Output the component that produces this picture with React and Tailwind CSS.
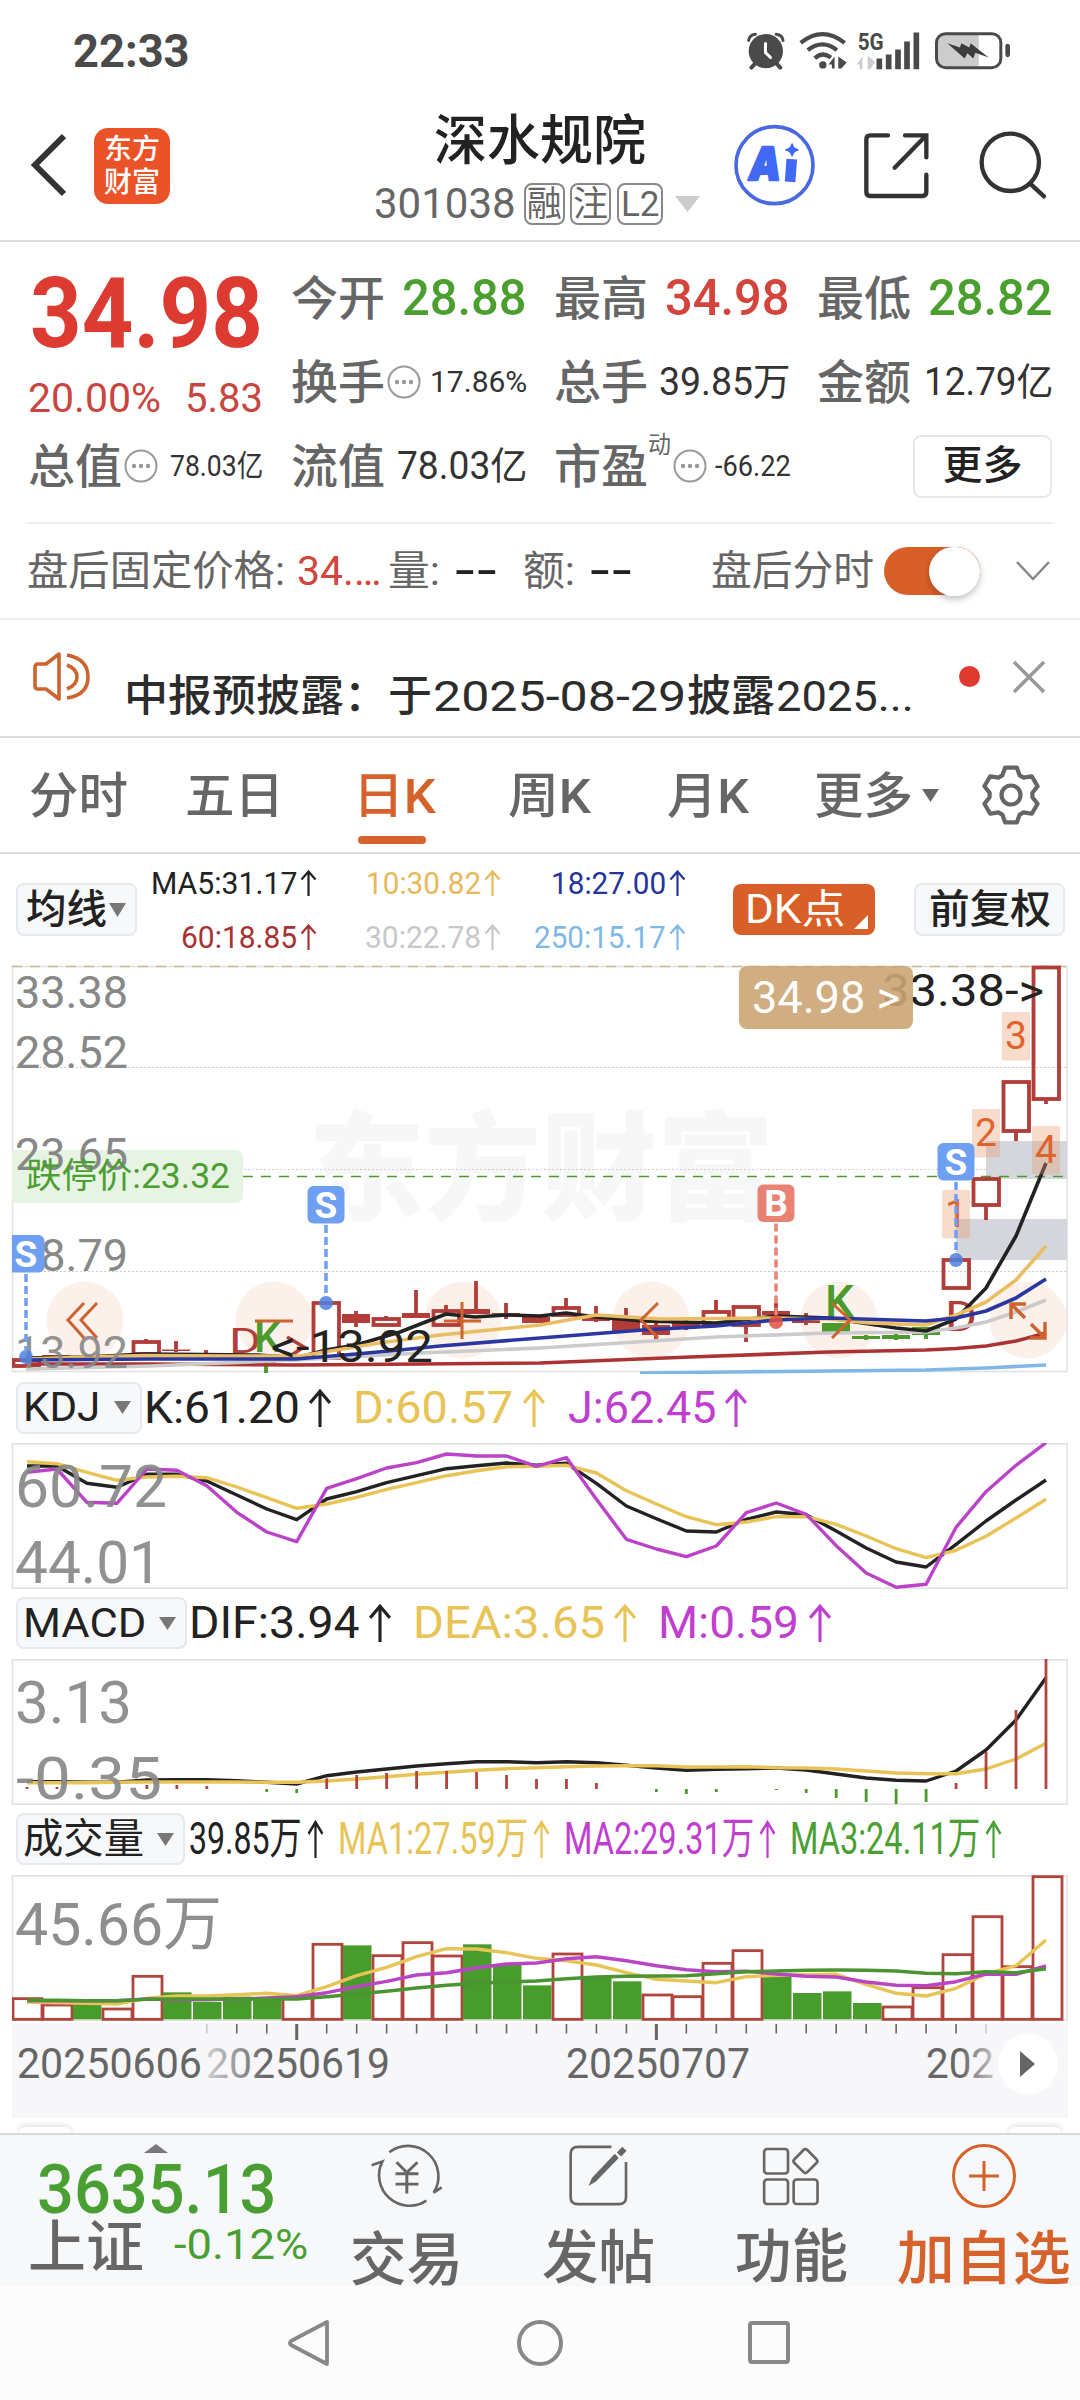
import React, { useLayoutEffect, useRef } from "react";

const FONT = "font-[Roboto,'Noto_Sans_CJK_SC',sans-serif]";

/* Text condensed or widened to fill the width of its box. */
function Fit({ className = "", children }) {
  const box = useRef(null);
  const inner = useRef(null);
  useLayoutEffect(() => {
    const natural = inner.current.offsetWidth;
    if (natural) inner.current.style.transform = `scaleX(${box.current.clientWidth / natural})`;
  }, [children]);
  return (
    <span ref={box} className={`flex shrink-0 whitespace-nowrap leading-none ${className}`}>
      <span ref={inner} className="block shrink-0 origin-left">{children}</span>
    </span>
  );
}

function Up({ className = "" }) {
  return (
    <svg viewBox="0 0 17 26" preserveAspectRatio="none" className={`shrink-0 ${className}`} fill="none" stroke="currentColor" strokeWidth="2.200">
      <path d="M8.5 1.5V26M1.5 9.500L8.500 1.500L15.500 9.500" />
    </svg>
  );
}

function Down({ className = "" }) {
  return (
    <svg viewBox="0 0 18 14" preserveAspectRatio="none" className={`shrink-0 ${className}`}>
      <path d="M0 0H18L9 14Z" fill="currentColor" />
    </svg>
  );
}

function StatusBar() {
  return (
    <div className="flex h-[102px] items-center text-[#4a4a4a]">
      <Fit className="ml-[73px] w-[117px] text-[46px] font-bold">22:33</Fit>
      <svg viewBox="165 45 125 125" className="ml-[555px] h-[42px] w-[42px] shrink-0">
        <circle cx="227" cy="108" r="51" fill="currentColor" />
        <g fill="none" stroke="currentColor" strokeLinecap="round">
          <path d="M176 76Q178 60 196 58M278 76Q276 60 258 58" strokeWidth="9" />
          <path d="M195 145L184 157M259 145L270 157" strokeWidth="12" />
        </g>
        <path d="M226 85V112L241 127" fill="none" stroke="#fff" strokeWidth="9" strokeLinecap="round" />
      </svg>
      <svg viewBox="320 45 152 125" className="ml-[9.5px] h-[42px] w-[51px] shrink-0">
        <g fill="none" stroke="currentColor" strokeWidth="12.500">
          <path d="M331 83Q396 31 462 83" />
          <path d="M352 105Q396 71 439 105" />
          <path d="M373 129Q397 108 421 127" />
        </g>
        <circle cx="397" cy="149" r="11" fill="currentColor" />
        <path d="M414 148L432 124V160H424V148ZM443 124L468 142L452 160H443Z" fill="currentColor" />
      </svg>
      <svg viewBox="495 45 195 125" className="ml-[8px] h-[42px] w-[65px] shrink-0 overflow-visible">
        <text x="500" y="105" fontSize="74" fontWeight="700" textLength="78" lengthAdjust="spacingAndGlyphs" fill="currentColor">5G</text>
        <path d="M497 148L514 124V162H506V148ZM530 122L552 140L538 162H530Z" fill="#ccc" />
        <g stroke="currentColor" strokeWidth="17" strokeLinecap="butt">
          <path d="M565 130V162M593 118V162M621 103V162M648 79V162M676 52V162" />
        </g>
      </svg>
      <svg viewBox="725 45 237 125" className="ml-[12px] h-[42px] w-[79px] shrink-0">
        <rect x="736" y="56" width="126" height="101" rx="24" fill="#ccc" />
        <rect x="820" y="56" width="42" height="101" fill="#ccc" />
        <rect x="735.500" y="55.500" width="193" height="102" rx="27" fill="none" stroke="currentColor" strokeWidth="9" />
        <rect x="942" y="86" width="14" height="40" rx="7" fill="currentColor" />
        <path d="M768 84L806 97L810 84L834 97L838 84L862 104L892 127L852 113L846 130L828 114L820 130Z" fill="#3c3c3c" />
      </svg>
    </div>
  );
}

function Header() {
  return (
    <div className="flex h-[140px] items-start border-b-2 border-[#dcdcdc]">
      <svg viewBox="0 0 36 64" className="ml-[30px] mt-[31px] h-[64px] w-[36px] shrink-0" fill="none" stroke="#333" strokeWidth="6">
        <path d="M34 3L5 32L34 61" />
      </svg>
      <div className="ml-[28px] mt-[26px] flex h-[76px] w-[76px] shrink-0 flex-col items-center justify-center rounded-[14px] bg-[#ea5328] text-[28px] font-medium leading-[33px] text-white">
        <span>东方</span>
        <span>财富</span>
      </div>
      <div className="ml-[204px] w-[326px] shrink-0">
        <Fit className="ml-[60px] mt-[13px] w-[212px] text-[54px] font-medium text-[#222]">深水规院</Fit>
        <div className="mt-[10px] flex h-[50px] items-center text-[#666]">
          <Fit className="w-[142px] text-[42px]">301038</Fit>
          <span className="ml-[8px] flex h-[42px] w-[41px] items-center justify-center rounded-[8px] border-2 border-[#888] text-[35px] leading-none">融</span>
          <span className="ml-[5px] flex h-[42px] w-[42px] items-center justify-center rounded-[8px] border-2 border-[#888] text-[35px] leading-none">注</span>
          <span className="ml-[6px] flex h-[42px] w-[46px] items-center justify-center rounded-[8px] border-2 border-[#888] text-[35px] leading-none">L2</span>
          <Down className="ml-[12px] h-[16px] w-[25px] text-[#ccc]" />
        </div>
      </div>
      <svg viewBox="130 328 250 250" className="ml-[33px] mt-[22px] h-[83px] w-[83px] shrink-0">
        <circle cx="255" cy="452" r="116" fill="none" stroke="#4a68e2" strokeWidth="11" />
        <text x="178" y="496" fontFamily="Inter" fontSize="138" fontWeight="900" fontStyle="italic" textLength="96" lengthAdjust="spacingAndGlyphs" fill="#4169f5" stroke="#4169f5" strokeWidth="7" strokeLinejoin="round">A</text>
        <path d="M307 434L302 502" stroke="#4169f5" strokeWidth="32" />
        <path d="M308 387Q311 403 327 406Q311 409 308 425Q305 409 288 406Q305 403 308 387Z" fill="#4169f5" stroke="#4169f5" strokeWidth="4" />
      </svg>
      <svg viewBox="515 345 207 210" className="ml-[46px] mt-[28px] h-[70px] w-[69px] shrink-0" fill="none" stroke="#333" strokeWidth="13" strokeLinecap="round">
        <path d="M593 361H540Q528 361 528 373V531Q528 543 540 543H696Q708 543 708 531V479" />
        <path d="M644 361H708V427M706 363L613 458" />
      </svg>
      <svg viewBox="865 345 210 210" className="ml-[47px] mt-[28px] h-[70px] w-[70px] shrink-0" fill="none" stroke="#333" strokeWidth="13" strokeLinecap="round">
        <circle cx="962" cy="442" r="86" />
        <path d="M1024 508L1063 544" />
      </svg>
    </div>
  );
}

function Dots() {
  return (
    <svg viewBox="0 0 34 34" className="ml-[2px] h-[34px] w-[34px] shrink-0">
      <circle cx="17" cy="17" r="15.500" fill="none" stroke="#999" strokeWidth="2" />
      <circle cx="10" cy="17" r="2.200" fill="#999" />
      <circle cx="17" cy="17" r="2.200" fill="#999" />
      <circle cx="24" cy="17" r="2.200" fill="#999" />
    </svg>
  );
}

function Label({ children }) {
  return <Fit className="w-[94px] text-[47px] font-medium text-[#666]">{children}</Fit>;
}

function Quote() {
  const cell = "flex items-center";
  return (
    <div className="grid h-[280px] grid-cols-4 grid-rows-[84px_84px_84px] gap-x-[28px] px-[28px] pt-[14px] text-[#333]">
      <div className="row-span-2 flex flex-col text-[#c8463f]">
        <Fit className="ml-[2px] mt-[8px] w-[233px] text-[99px] font-bold text-[#dd3b32]">34.98</Fit>
        <div className="mt-[15px] flex justify-between">
          <Fit className="w-[133px] text-[41px]">20.00%</Fit>
          <Fit className="w-[78px] text-[41px]">5.83</Fit>
        </div>
      </div>
      <div className={cell}><Label>今开</Label><Fit className="ml-[17px] w-[125px] text-[50px] font-medium text-[#4a9f2f]">28.88</Fit></div>
      <div className={cell}><Label>最高</Label><Fit className="ml-[17px] w-[125px] text-[50px] font-medium text-[#d2443c]">34.98</Fit></div>
      <div className={cell}><Label>最低</Label><Fit className="ml-[17px] w-[125px] text-[50px] font-medium text-[#4a9f2f]">28.82</Fit></div>
      <div className={cell}><Label>换手</Label><Dots /><Fit className="ml-[9px] w-[97px] text-[30px]">17.86%</Fit></div>
      <div className={cell}><Label>总手</Label><Fit className="ml-[11px] w-[131px] text-[38px]">39.85万</Fit></div>
      <div className={cell}><Label>金额</Label><Fit className="ml-[13px] w-[129px] text-[38px]">12.79亿</Fit></div>
      <div className={cell}><Label>总值</Label><Dots /><Fit className="ml-[12px] w-[93px] text-[30px]">78.03亿</Fit></div>
      <div className={cell}><Label>流值</Label><Fit className="ml-[12px] w-[130px] text-[38px]">78.03亿</Fit></div>
      <div className={cell}>
        <Label>市盈</Label>
        <Fit className="-mt-[42px] w-[23px] text-[24px] text-[#666]">动</Fit>
        <Dots />
        <Fit className="ml-[8px] w-[76px] text-[29px]">-66.22</Fit>
      </div>
      <div className="flex items-center justify-end">
        <div className="flex h-[63px] w-[139px] items-center justify-center rounded-[8px] border-2 border-[#e8e8e8] text-[40px] font-medium leading-none text-[#222]">更多</div>
      </div>
    </div>
  );
}

function AfterHours() {
  return (
    <div className="h-[96px] px-[27px]">
      <div className="flex h-full items-center border-t-2 border-[#eee] text-[#666]">
        <Fit className="w-[258px] text-[41px]">盘后固定价格:</Fit>
        <Fit className="ml-[12px] w-[84px] text-[41px] text-[#d2443c]">34.…</Fit>
        <Fit className="ml-[7px] w-[52px] text-[41px]">量:</Fit>
        <Fit className="ml-[14px] w-[44px] text-[41px] font-medium text-[#222]">--</Fit>
        <Fit className="ml-[25px] w-[52px] text-[41px]">额:</Fit>
        <Fit className="ml-[14px] w-[44px] text-[41px] font-medium text-[#222]">--</Fit>
        <Fit className="ml-[78px] w-[163px] text-[41px]">盘后分时</Fit>
        <span className="ml-[10px] flex h-[48px] w-[96px] shrink-0 items-center justify-end rounded-full bg-[#d95f28]">
          <span className="h-[49px] w-[51px] rounded-full bg-white shadow-[0_3px_7px_rgba(0,0,0,0.25)]" />
        </span>
        <svg viewBox="0 0 36 22" className="ml-[35px] h-[22px] w-[36px] shrink-0" fill="none" stroke="#888" strokeWidth="2.500">
          <path d="M2 2L18 19L34 2" />
        </svg>
      </div>
    </div>
  );
}

function Notice() {
  return (
    <div className="flex h-[118px] items-start border-t-2 border-[#eee]">
      <svg viewBox="0 0 60 52" className="ml-[32px] mt-[31px] h-[52px] w-[60px] shrink-0" fill="none" stroke="#cd6430" strokeWidth="3.600">
        <path d="M27 3L14 13H6Q3 13 3 16V35Q3 38 6 38H14L27 48Z" strokeLinejoin="round" />
        <path d="M35 14Q45 18 45 26Q45 34 35 38" />
        <path d="M35 4Q56 8 56 26Q56 44 35 47" />
      </svg>
      <div className="ml-[32px] mt-[55px] flex w-[792px] shrink-0 text-[43px] text-[#2c2c2c]">
        <Fit className="w-[308px] font-medium">中报预披露：于</Fit>
        <Fit className="ml-[1px] w-[253px]">2025-08-29</Fit>
        <Fit className="ml-[1px] w-[88px] font-medium">披露</Fit>
        <Fit className="ml-[1px] w-[138px]">2025...</Fit>
      </div>
      <span className="ml-[43px] mt-[46px] h-[21px] w-[21px] shrink-0 rounded-full bg-[#e0392f]" />
      <svg viewBox="0 0 34 34" className="ml-[32px] mt-[40px] h-[34px] w-[34px] shrink-0" fill="none" stroke="#999" strokeWidth="3.500">
        <path d="M2 2L32 32M32 2L2 32" />
      </svg>
    </div>
  );
}

const gearPoints = Array.from({ length: 6 }, (_, k) =>
  [[-24, 21.5], [-12, 28], [12, 28], [24, 21.5]].map(([off, r]) => {
    const a = ((k * 60 - 90 + off) * Math.PI) / 180;
    return `${(30 + r * Math.cos(a)).toFixed(1)},${(30 + r * Math.sin(a)).toFixed(1)}`;
  }).join(" ")
).join(" ");

function Tabs() {
  return (
    <div className="flex h-[118px] items-center border-y-2 border-[#dcdcdc] text-[49px] font-medium text-[#666]">
      <Fit className="ml-[29px] mt-[2px] w-[99px]">分时</Fit>
      <Fit className="ml-[57px] mt-[2px] w-[99px]">五日</Fit>
      <div className="ml-[69px] flex h-full w-[83px] shrink-0 flex-col justify-end text-[#d6622b]">
        <Fit className="w-[83px]">日K</Fit>
        <span className="mb-[8px] ml-[5px] mt-[15px] h-[8px] w-[68px] rounded-full bg-[#d6622b]" />
      </div>
      <Fit className="ml-[72px] mt-[2px] w-[83px]">周K</Fit>
      <Fit className="ml-[76px] mt-[2px] w-[82px]">月K</Fit>
      <Fit className="ml-[65px] mt-[2px] w-[99px]">更多</Fit>
      <Down className="ml-[9px] h-[13px] w-[17px]" />
      <svg viewBox="0 0 60 60" className="ml-[42px] h-[60px] w-[60px] shrink-0" fill="none" stroke="#666" strokeWidth="4.200" strokeLinejoin="round">
        <polygon points={gearPoints} />
        <circle cx="30" cy="30" r="9.500" />
      </svg>
    </div>
  );
}

function MaValue({ className, textClass, children }) {
  return (
    <div className={`flex items-center justify-end ${className}`}>
      <Fit className={`text-[31px] ${textClass}`}>{children}</Fit>
      <Up className="ml-[3px] h-[26px] w-[17px]" />
    </div>
  );
}

function MaRow() {
  return (
    <div className="flex h-[111px] items-center">
      <div className="ml-[16px] flex h-[53px] w-[121px] shrink-0 items-center rounded-[8px] border-2 border-[#e6e8ec] bg-[#f7f8fa] text-[#222]">
        <Fit className="ml-[8px] w-[81px] text-[40px] font-medium">均线</Fit>
        <Down className="ml-[2px] h-[14px] w-[17px] text-[#777]" />
      </div>
      <div className="ml-[8px] grid h-full w-[541px] shrink-0 grid-cols-[172px_184px_185px] grid-rows-[54px_54px] pt-[2px]">
        <MaValue className="text-[#222]" textClass="w-[146px]">MA5:31.17</MaValue>
        <MaValue className="text-[#e8b95a]" textClass="w-[115px]">10:30.82</MaValue>
        <MaValue className="text-[#26359b]" textClass="w-[115px]">18:27.00</MaValue>
        <MaValue className="text-[#a83232]" textClass="w-[116px]">60:18.85</MaValue>
        <MaValue className="text-[#c8c8c8]" textClass="w-[116px]">30:22.78</MaValue>
        <MaValue className="text-[#7fb8e8]" textClass="w-[132px]">250:15.17</MaValue>
      </div>
      <div className="ml-[47px] flex h-[51px] w-[142px] shrink-0 items-center rounded-[8px] bg-[#d95f28] text-white">
        <Fit className="ml-[12px] w-[100px] text-[40px]">DK点</Fit>
        <svg viewBox="0 0 14 14" className="ml-[9px] mt-[24px] h-[14px] w-[14px] shrink-0"><path d="M14 0V14H0Z" fill="#fff" /></svg>
      </div>
      <div className="ml-[39px] flex h-[53px] w-[151px] shrink-0 items-center justify-center rounded-[8px] border-2 border-[#e6e8ec] bg-[#f7f8fa]">
        <Fit className="w-[122px] text-[40px] font-medium text-[#222]">前复权</Fit>
      </div>
    </div>
  );
}

/* Text drawn inside a chart, stretched to the given width. */
function Txt({ x, y, w, size, fill = "#888", weight = 400, opacity = 1, children }) {
  return (
    <text x={x} y={y} fontSize={size} fontWeight={weight} fill={fill} opacity={opacity} textLength={w} lengthAdjust="spacingAndGlyphs">
      {children}
    </text>
  );
}

const RED = "#b23c38";
const GREEN = "#4a9a2c";

/* Day index, kind (h hollow, f filled, g green), body top and bottom, wick top and bottom. */
const candles = [
  [0, "h", 1360, 1366, 1360, 1366], [1, "f", 1355, 1358, 1355, 1358], [2, "f", 1356, 1358, 1355, 1358],
  [4, "h", 1342, 1354, 1339, 1355], [5, "f", 1349.500, 1351, 1341, 1352], [6, "f", 1354, 1356, 1350, 1356],
  [8, "g", 1354, 1356, 1354, 1373], [10, "h", 1303, 1358, 1302, 1358], [11, "f", 1314, 1323, 1311, 1327],
  [12, "h", 1319, 1325, 1316, 1326], [13, "f", 1313, 1318, 1290, 1318], [14, "h", 1311, 1325, 1305, 1326],
  [15, "f", 1309, 1314, 1281, 1314], [16, "f", 1313, 1314, 1303, 1319], [17, "f", 1317, 1323, 1317, 1323],
  [18, "h", 1308, 1315, 1298, 1315], [19, "f", 1318, 1321, 1306, 1322], [20, "f", 1318, 1331, 1308, 1331],
  [21, "f", 1325, 1335, 1320, 1339], [22, "f", 1323, 1328, 1320, 1330], [23, "h", 1312, 1324, 1300, 1324],
  [24, "h", 1307, 1325, 1306, 1342], [25, "f", 1311, 1315, 1303, 1316], [26, "f", 1320, 1323, 1313, 1325],
  [27, "g", 1323, 1333, 1323, 1333], [28, "g", 1336, 1339, 1335, 1340], [29, "g", 1335, 1339, 1334, 1340],
  [30, "g", 1327, 1335, 1327, 1339], [31, "h", 1260, 1288, 1260, 1288], [32, "h", 1179, 1205, 1178, 1220],
  [33, "h", 1082, 1131, 1081, 1141], [34, "h", 967.500, 1099, 967, 1104],
];

const averages = [
  ["#7fb8e8", "640,1373 730,1372 829,1371 926,1370 986,1368 1046,1365"],
  ["#ac3333", "26,1364 150,1364 296,1365 420,1364 540,1363 690,1357 829,1352 926,1350 956,1348.500 986,1346 1016,1341 1046,1333"],
  ["#cbcbcb", "26,1369 150,1366 296,1360 420,1353 540,1348 716,1337 829,1333 926,1332 956,1328 986,1322 1016,1312 1046,1300"],
  ["#222", "26,1358 86,1357 145,1354 258,1355 296,1358 326,1350 356,1345 400,1332 446,1314 475,1317 506,1315 540,1316 566,1313 596,1317 643,1321 716,1323 776,1316 829,1318 896,1328 926,1331 956,1319 986,1288 1016,1236 1046,1163"],
  ["#ebbd62", "26,1359 86,1357 145,1355.500 240,1356 300,1356 379,1343 440,1335 540,1325 596,1315 660,1319 720,1318.500 776,1318 829,1319 870,1323 926,1325 956,1315 986,1302 1016,1280 1046,1246"],
  ["#2a37a3", "26,1360 150,1359 296,1359 356,1354 400,1350 440,1346 540,1338 643,1330 716,1326 776,1320 829,1318 926,1321 956,1318 986,1311 1016,1298 1046,1279"],
];

function Signal({ x, top, bottom, letter, color, dot }) {
  return (
    <g>
      <path d={`M${x} ${top + 39}V${bottom - 7}`} stroke={color} strokeWidth="3.500" strokeDasharray="8 4" fill="none" />
      <rect x={x - 18.500} y={top} width="37" height="37.500" rx="6" fill={color} />
      <text x={x} y={top + 31.500} textAnchor="middle" fontSize="37" fontWeight="700" fill="#fff">{letter}</text>
      <circle cx={x} cy={bottom} r="7" fill={dot} opacity="0.85" />
    </g>
  );
}

function PriceChart() {
  return (
    <svg viewBox="0 965 1080 409" className="block h-[409px] w-[1080px]">
      <clipPath id="plot"><rect x="12" y="960" width="1056" height="415" /></clipPath>
      <text x="308" y="1211" fontSize="118" fontWeight="900" fill="#f7f7f7" textLength="466" lengthAdjust="spacingAndGlyphs">东方财富</text>
      <rect x="12.500" y="966.500" width="1054.500" height="405" fill="none" stroke="#e2e2e2" strokeWidth="1.600" />
      <path d="M12 1067.500H1067M12 1169.500H1067M12 1271.500H1067" stroke="#ccc" strokeWidth="1" strokeDasharray="2 2" />
      <path d="M12 966.500H1067" stroke="#cdb98e" strokeWidth="1.500" strokeDasharray="10 8" />
      <g clipPath="url(#plot)">
        <rect x="986" y="1141" width="81" height="38" fill="#d5d6dc" />
        <rect x="956" y="1219" width="111" height="41" fill="#d5d6dc" />
        {[85, 274, 463, 651, 839, 1028].map((cx) => <circle key={cx} cx={cx} cy="1320" r="38.500" fill="#fbf1ea" />)}
        <Txt x="15" y="1007.500" w="113" size="45">33.38</Txt>
        <Txt x="15" y="1067.500" w="113" size="45">28.52</Txt>
        <rect x="6" y="1150" width="237" height="53" rx="7" fill="#e7f4e4" />
        <Txt x="15" y="1169.500" w="113" size="45">23.65</Txt>
        <Txt x="15" y="1271" w="113" size="45">18.79</Txt>
        <Txt x="26" y="1188" w="204" size="35" fill="#4a9f2f">跌停价:23.32</Txt>
        <path d="M243 1176.500H1067" stroke={GREEN} strokeWidth="1.500" strokeDasharray="10 8" />
        {candles.map(([i, kind, top, bottom, high, low]) => {
          const x = 26 + 30 * i;
          const color = kind === "g" ? GREEN : RED;
          return (
            <g key={i} stroke={color} strokeWidth="3.800">
              <path d={`M${x} ${high}V${top}M${x} ${bottom}V${low}`} />
              {kind === "h"
                ? <rect x={x - 12.500} y={top} width="25.500" height={bottom - top} fill="none" />
                : <rect x={x - 14} y={top} width="28" height={bottom - top} fill={color} stroke="none" />}
            </g>
          );
        })}
        <Txt x="229" y="1353" w="32" size="35" fill={RED}>D</Txt>
        <Txt x="254" y="1352" w="27" size="42" weight={500} fill={GREEN}>K</Txt>
        <path d="M264 1361H276M287 1337L304 1347L287 1358" fill="none" stroke={RED} strokeWidth="3.500" />
        <Txt x="825" y="1317" w="29" size="45" weight={500} fill={GREEN}>K</Txt>
        <Txt x="945" y="1331" w="32" size="43" fill={RED}>D</Txt>
        {averages.map(([color, points]) => <polyline key={color} points={points} fill="none" stroke={color} strokeWidth="3.600" strokeLinejoin="round" />)}
        <Txt x="15" y="1368" w="113" size="45" opacity={0.9}>13.92</Txt>
        <Txt x="271" y="1362" w="162" size="45" fill="#222">&lt;-13.92</Txt>
        <g fill="#e8996b" fillOpacity="0.35">
          <rect x="942" y="1190" width="28" height="48.500" rx="2" />
          <rect x="972" y="1109" width="28" height="48.500" rx="2" />
          <rect x="1002" y="1012" width="28" height="48.500" rx="2" />
          <rect x="1032" y="1126" width="28" height="48.500" rx="2" />
        </g>
        <g fill="#e0622c" fontSize="39" fontWeight="400" textAnchor="middle">
          <text x="956" y="1227">1</text>
          <text x="986" y="1146">2</text>
          <text x="1016" y="1049">3</text>
          <text x="1046" y="1163">4</text>
        </g>
        <Signal x={26} top={1235} bottom={1357} letter="S" color="#6f9ff2" dot="#4f80e0" />
        <Signal x={326} top={1186} bottom={1303} letter="S" color="#6f9ff2" dot="#4f80e0" />
        <Signal x={956} top={1143} bottom={1260} letter="S" color="#6f9ff2" dot="#4f80e0" />
        <Signal x={776} top={1184.500} bottom={1322} letter="B" color="#e98272" dot="#e0503f" />
        <g fill="none" stroke="#cd6430" strokeWidth="3">
          <path d="M84 1303L68 1320L84 1338M97 1303L81 1320L97 1338" />
          <path d="M255 1321H293M444 1321H481M462 1302V1339" />
          <path d="M658 1303L641 1320L658 1338M832 1303L850 1320L832 1338" />
          <path d="M1011 1319V1304H1026M1012 1305L1025 1318M1031 1324L1044 1337M1045 1322V1338H1030" strokeWidth="3.500" />
        </g>
        <Txt x="882" y="1006" w="162" size="45" fill="#222">33.38-&gt;</Txt>
        <rect x="739" y="966" width="174" height="63" rx="8" fill="#cba573" opacity="0.9" />
        <Txt x="752" y="1012.500" w="148" size="44" fill="#fff">34.98 &gt;</Txt>
      </g>
    </svg>
  );
}

const dayX = (i) => 27 + 30 * i - 0.03 * i;
const line = (values, toY) => values.map((v, i) => `${dayX(i).toFixed(1)},${toY(v).toFixed(1)}`).join(" ");

function Line({ values, toY, color, width = 3.4 }) {
  return <polyline points={line(values, toY)} fill="none" stroke={color} strokeWidth={width} strokeLinejoin="round" />;
}

function Frame({ children, id }) {
  return (
    <svg viewBox="0 0 1080 146" className="block h-[146px] w-[1080px]">
      <clipPath id={id}><rect x="12" y="0" width="1056" height="146" /></clipPath>
      <rect x="12.500" y="0.800" width="1054.500" height="144.400" fill="none" stroke="#e2e2e2" strokeWidth="1.600" />
      <g clipPath={`url(#${id})`}>{children}</g>
    </svg>
  );
}

const kdj = {
  k: [288, 288, 340, 352, 313, 313, 333, 375, 417, 449, 387, 365, 338, 317, 296, 287, 279, 286, 280, 340, 408, 446, 483, 486, 448, 426, 434, 483, 534, 576, 591, 523, 453, 390, 330],
  d: [275, 281, 307, 331, 321, 319, 323, 351, 383, 415, 402, 382, 358, 338, 317, 302, 290, 289, 286, 309, 362, 402, 440, 464, 456, 440, 440, 463, 498, 536, 563, 541, 499, 444, 388],
  j: [307, 297, 397, 400, 297, 301, 347, 427, 486, 515, 355, 326, 294, 278, 252, 258, 258, 289, 263, 388, 508, 537, 560, 528, 428, 399, 433, 527, 609, 652, 643, 472, 365, 286, 218],
};

function KdjChart() {
  const y = (v) => v / 3 - 73;
  return (
    <Frame id="kdj">
      <Line values={kdj.k} toY={y} color="#222" />
      <Line values={kdj.d} toY={y} color="#e8c355" />
      <Line values={kdj.j} toY={y} color="#bb43c8" />
      <Txt x="15" y="64" w="152" size="60" opacity={0.92}>60.72</Txt>
      <Txt x="15" y="140" w="147" size="60" opacity={0.92}>44.01</Txt>
    </Frame>
  );
}

const macd = {
  dif: [575, 575, 577, 577, 570, 569, 569, 572, 577, 582, 557, 546, 537, 528, 521, 515, 515, 518, 515, 518, 526, 534, 541, 538, 536, 534, 540, 552, 564, 571, 573, 543, 480, 390, 263],
  dea: [578, 578, 578, 577, 576, 576, 576, 576, 577, 577, 573, 567, 560, 553, 547, 541, 536, 533, 530, 528, 527, 527, 531, 531, 530, 533, 534, 537, 543, 549, 551, 551, 537, 507, 460],
  bars: [591, 591, 597, 597, 585, 585, 588, 597, 606, 609, 565, 555, 549, 543, 543, 546, 555, 567, 567, 579, 597, 606, 612, 606, 597, 600, 609, 624, 636, 642, 636, 579, 486, 360, 207],
};

function MacdChart() {
  const y = (v) => v / 3 - 69;
  return (
    <Frame id="macd">
      <Line values={macd.dif} toY={y} color="#222" />
      <Line values={macd.dea} toY={y} color="#e8c355" />
      {macd.bars.map((v, i) => v !== 597 && (
        <path key={i} d={`M${dayX(i)} ${y(597)}V${y(v)}`} stroke={v < 597 ? "#b2443e" : GREEN} strokeWidth="2.800" />
      ))}
      <Txt x="15" y="64" w="117" size="60" opacity={0.92}>3.13</Txt>
      <Txt x="16" y="140" w="146" size="60" opacity={0.92}>-0.35</Txt>
    </Frame>
  );
}

const volume = {
  tops: [443, 462, 462, 474, 376, 427, 456, 440, 447, 435, 280, 286, 314, 275, 315, 283, 345, 406, 309, 382, 394, 432, 437, 337, 299, 380, 429, 424, 459, 468, 410, 311, 197, 347, 77],
  falling: [2, 5, 6, 7, 8, 11, 15, 16, 17, 19, 20, 25, 26, 27, 28],
  ma1: [456, 458, 460, 462, 445, 438, 438, 434, 430, 437, 410, 377, 352, 320, 296, 297, 308, 325, 332, 345, 368, 388, 393, 398, 380, 376, 374, 373, 403, 430, 438, 415, 372, 347, 270],
  ma2: [452, 452, 452, 452, 447, 449, 449, 447, 444, 440, 428, 410, 394, 375, 368, 353, 342, 339, 326, 320, 332, 347, 359, 365, 364, 372, 379, 381, 396, 406, 407, 395, 372, 373, 348],
  ma3: [451, 451, 452, 452, 448, 447, 447, 447, 447, 447, 440, 432, 424, 414, 406, 400, 396, 393, 386, 381, 379, 378, 377, 371, 365, 363, 361, 360, 361, 363, 370, 371, 365, 368, 356],
};

function VolumeChart() {
  const y = (v) => v / 3 - 25;
  return (
    <Frame id="volume">
      {volume.tops.map((v, i) => {
        const x = 12 + 30 * i;
        return volume.falling.includes(i)
          ? <rect key={i} x={x + 1} y={y(v)} width="28.500" height={y(508) - y(v)} fill="#489c2c" />
          : <rect key={i} x={x + 1} y={y(v) + 1} width="29" height={y(508) - y(v) - 1} fill="none" stroke="#b2443e" strokeWidth="2.800" />;
      })}
      <Line values={volume.ma1} toY={y} color="#e6c455" />
      <Line values={volume.ma2} toY={y} color="#b945c5" />
      <Line values={volume.ma3} toY={y} color="#4a9432" />
      <Txt x="15" y="70" w="207" size="60" opacity={0.95}>45.66万</Txt>
    </Frame>
  );
}

function IndicatorBox({ className, textClass, children }) {
  return (
    <div className={`ml-[16px] flex h-[52px] shrink-0 items-center justify-between rounded-[8px] border-2 border-[#e6e8ec] bg-[#f7f8fa] pl-[5px] pr-[9px] text-[#222] ${className}`}>
      <Fit className={`text-[41px] ${textClass}`}>{children}</Fit>
      <Down className="h-[13px] w-[17px] text-[#777]" />
    </div>
  );
}

function Axis() {
  return (
    <div className="mx-[12px] mt-[2px] h-[95px] bg-[#f7f7fa]">
      <svg viewBox="12 2022 1056 95" className="block h-[95px] w-[1056px]">
        <defs>
          <linearGradient id="fadeIn" gradientUnits="userSpaceOnUse" x1="205" x2="265" y1="0" y2="0">
            <stop offset="0" stopColor="#666" stopOpacity="0.25" />
            <stop offset="1" stopColor="#666" />
          </linearGradient>
          <linearGradient id="fadeOut" gradientUnits="userSpaceOnUse" x1="960" x2="1000" y1="0" y2="0">
            <stop offset="0" stopColor="#666" />
            <stop offset="1" stopColor="#666" stopOpacity="0.25" />
          </linearGradient>
        </defs>
        {Array.from({ length: 27 }, (_, n) => n + 6).map((i) => {
          const long = i === 9 || i === 21;
          const faint = i === 6 || i === 32;
          return <path key={i} d={`M${dayX(i)} 2023V${long ? 2039 : 2032.500}`} stroke="#666" strokeWidth={long ? 3 : 1.600} opacity={faint ? 0.3 : 1} />;
        })}
        <Txt x="17" y="2076.500" w="185" size="42" fill="#666">20250606</Txt>
        <Txt x="206" y="2076.500" w="184" size="42" fill="url(#fadeIn)">20250619</Txt>
        <Txt x="566" y="2076.500" w="184" size="42" fill="#666">20250707</Txt>
        <Txt x="926" y="2076.500" w="68" size="42" fill="url(#fadeOut)">202</Txt>
        <circle cx="1028" cy="2063" r="30" fill="#fff" />
        <path d="M1020 2050L1035 2063L1020 2076Z" fill="#666" />
      </svg>
    </div>
  );
}

function NavItem({ className = "text-[#666]", width, label, children }) {
  return (
    <div className={`flex flex-1 flex-col items-center ${className}`}>
      <div className="flex h-[67px] items-center justify-center">{children}</div>
      <Fit className={`mt-[21px] text-[58px] font-medium ${width}`}>{label}</Fit>
    </div>
  );
}

function BottomBar() {
  return (
    <div className="flex h-[153px] border-t-2 border-[#d5d8db] bg-[#f7f8fa]">
      <div className="w-[310px] shrink-0">
        <svg viewBox="0 0 24 9" className="ml-[144px] mt-[9px] block h-[9px] w-[24px]"><path d="M0 9L12 0L24 9Z" fill="#77777c" /></svg>
        <Fit className="ml-[37px] mt-[2px] w-[239px] text-[69px] font-medium text-[#4a9f33]">3635.13</Fit>
        <div className="-mt-[5px] flex items-center">
          <Fit className="ml-[28px] w-[116px] text-[57px] font-medium text-[#666]">上证</Fit>
          <Fit className="-mt-[5px] ml-[30px] w-[134px] text-[42px] text-[#4a9f33]">-0.12%</Fit>
        </div>
      </div>
      <div className="flex flex-1 pt-[8px]">
        <NavItem label="交易" width="w-[113px]">
          <svg viewBox="110 40 220 202" className="h-[67px] w-[73px]" fill="none" stroke="currentColor" strokeWidth="8">
            <path d="M168 68A92 92 0 0 1 302 190L326 174" />
            <path d="M280 214A92 92 0 0 1 147 96L115 107" />
            <path d="M190 98L221 129L253 98M187 133H256M187 164H256M221 129V192" strokeWidth="9" />
          </svg>
        </NavItem>
        <NavItem label="发帖" width="w-[113px]">
          <svg viewBox="685 45 190 195" className="h-[65px] w-[63px]" fill="none" stroke="currentColor" strokeWidth="8">
            <path d="M819 56H718Q696 56 696 78V207Q696 229 718 229H841Q863 229 863 207V102" />
            <path d="M750 174L760 150L829 77L841 90L773 160Z" fill="currentColor" stroke="none" />
            <path d="M842 79L858 62" strokeWidth="18" strokeLinecap="butt" />
          </svg>
        </NavItem>
        <NavItem label="功能" width="w-[113px]">
          <svg viewBox="1248 45 180 190" className="h-[63px] w-[60px]" fill="none" stroke="currentColor" strokeWidth="8">
            <rect x="1257" y="60" width="72" height="74" rx="9" />
            <rect x="1257" y="152" width="72" height="74" rx="9" />
            <rect x="1346" y="152" width="72" height="74" rx="9" />
            <rect x="1354" y="69" width="55" height="55" rx="8" transform="rotate(45 1381.500 96.500)" />
          </svg>
        </NavItem>
        <NavItem label="加自选" width="w-[174px]" className="text-[#d6622b]">
          <svg viewBox="0 0 66 66" className="h-[66px] w-[66px]" fill="none" stroke="currentColor" strokeWidth="3">
            <circle cx="33" cy="33" r="30.500" />
            <path d="M18 33H48M33 18V48" />
          </svg>
        </NavItem>
      </div>
    </div>
  );
}

function SystemNav() {
  return (
    <div className="flex h-[114px] items-start bg-[#fcfcfc]">
      <svg viewBox="0 0 44 50" className="ml-[287px] mt-[32px] h-[50px] w-[44px] shrink-0" fill="none" stroke="#888" strokeWidth="3.800" strokeLinejoin="round">
        <path d="M40 4V46L4 27Q2 25 4 23Z" />
      </svg>
      <svg viewBox="0 0 50 50" className="ml-[184px] mt-[32px] h-[50px] w-[50px] shrink-0" fill="none" stroke="#888" strokeWidth="4">
        <circle cx="25" cy="25" r="21" />
      </svg>
      <span className="ml-[183px] mt-[35px] h-[43px] w-[42px] shrink-0 rounded-[4px] border-4 border-[#888]" />
    </div>
  );
}

export default function App() {
  return (
    <div className={`h-[2400px] w-[1080px] overflow-hidden bg-white ${FONT}`}>
      <StatusBar />
      <Header />
      <Quote />
      <AfterHours />
      <Notice />
      <Tabs />
      <MaRow />
      <PriceChart />
      <div className="flex h-[69px] items-center pb-[2px]">
        <IndicatorBox className="w-[126px]" textClass="w-[77px]">KDJ</IndicatorBox>
        <Fit className="ml-[2px] w-[156px] text-[44px] text-[#222]">K:61.20</Fit>
        <Up className="ml-[8px] h-[38px] w-[24px] text-[#222]" />
        <Fit className="ml-[21px] w-[160px] text-[44px] text-[#e8c355]">D:60.57</Fit>
        <Up className="ml-[9px] h-[38px] w-[24px] text-[#e8c355]" />
        <Fit className="ml-[22px] w-[148px] text-[44px] text-[#c03fd0]">J:62.45</Fit>
        <Up className="ml-[8px] h-[38px] w-[24px] text-[#c03fd0]" />
      </div>
      <KdjChart />
      <div className="flex h-[70px] items-center pb-[2px]">
        <IndicatorBox className="w-[171px]" textClass="w-[123px]">MACD</IndicatorBox>
        <Fit className="ml-[2px] w-[171px] text-[44px] text-[#222]">DIF:3.94</Fit>
        <Up className="ml-[8px] h-[38px] w-[24px] text-[#222]" />
        <Fit className="ml-[21px] w-[192px] text-[44px] text-[#e8c355]">DEA:3.65</Fit>
        <Up className="ml-[8px] h-[38px] w-[24px] text-[#e8c355]" />
        <Fit className="ml-[21px] w-[141px] text-[44px] text-[#c03fd0]">M:0.59</Fit>
        <Up className="ml-[9px] h-[38px] w-[24px] text-[#c03fd0]" />
      </div>
      <MacdChart />
      <div className="flex h-[70px] items-center pb-[2px]">
        <IndicatorBox className="w-[169px]" textClass="w-[121px]">成交量</IndicatorBox>
        <Fit className="ml-[4px] w-[113px] text-[44px] text-[#222]">39.85万</Fit>
        <Up className="ml-[5px] h-[38px] w-[17px] text-[#222]" />
        <Fit className="ml-[14px] w-[190px] text-[44px] text-[#e8c355]">MA1:27.59万</Fit>
        <Up className="ml-[5px] h-[38px] w-[17px] text-[#e8c355]" />
        <Fit className="ml-[14px] w-[190px] text-[44px] text-[#c03fd0]">MA2:29.31万</Fit>
        <Up className="ml-[5px] h-[38px] w-[17px] text-[#c03fd0]" />
        <Fit className="ml-[14px] w-[190px] text-[44px] text-[#4a9f33]">MA3:24.11万</Fit>
        <Up className="ml-[5px] h-[38px] w-[17px] text-[#4a9f33]" />
      </div>
      <VolumeChart />
      <Axis />
      <div className="flex h-[15px] items-end justify-between overflow-hidden px-[19px]">
        <span className="h-[6px] w-[52px] rounded-t-[8px] bg-white shadow-[0_0_6px_rgba(0,0,0,0.22)]" />
        <span className="h-[6px] w-[52px] rounded-t-[8px] bg-white shadow-[0_0_6px_rgba(0,0,0,0.22)]" />
      </div>
      <BottomBar />
      <SystemNav />
    </div>
  );
}
